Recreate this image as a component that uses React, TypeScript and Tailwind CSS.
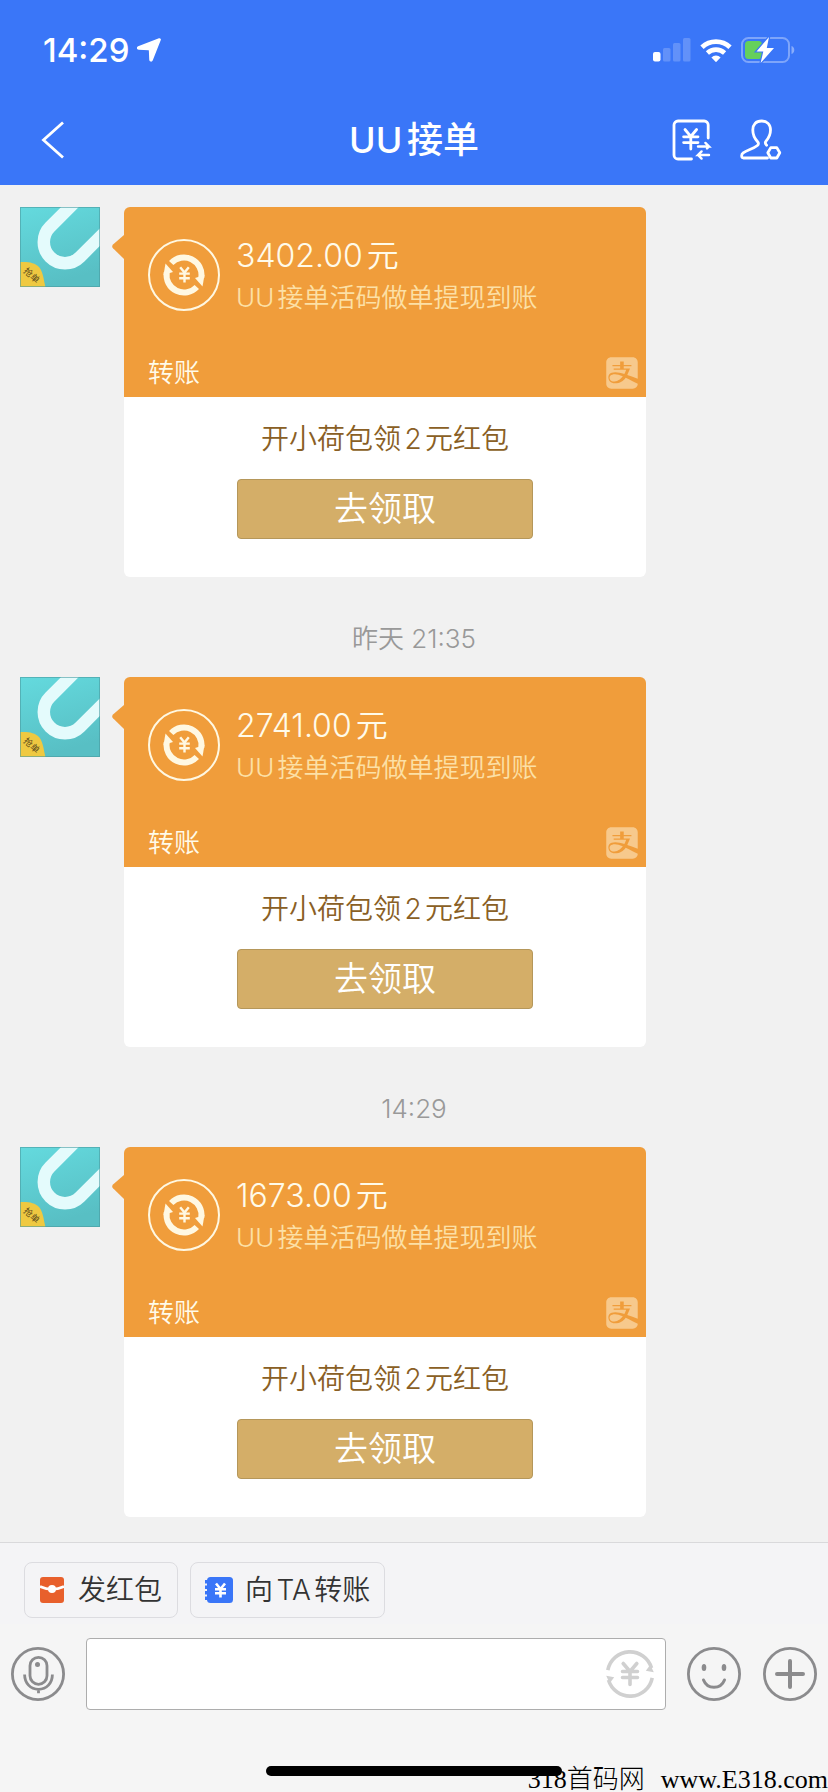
import { useState } from "react";
import { FaAlipay } from "react-icons/fa";

interface Transfer {
  id: number;
  time: string | null;
  amount: string;
}

const TRANSFERS: Transfer[] = [
  { id: 1, time: null, amount: "3402.00" },
  { id: 2, time: "昨天 21:35", amount: "2741.00" },
  { id: 3, time: "14:29", amount: "1673.00" },
];

function StatusBar() {
  return (
    <div className="flex h-[100px] items-center justify-between pl-[43px] pr-[33px]">
      <div className="flex items-center gap-2">
        <span className="text-[33px] leading-none font-medium">14:29</span>
        <svg className="h-6 w-6" viewBox="0 0 24 24" fill="currentColor" stroke="currentColor" strokeWidth="1.500" strokeLinejoin="round" aria-hidden="true">
          <path d="M22.2 1C23 .8 23.300 1.200 23 1.900L15 22.200C14.500 23.300 13 23 13 21.800L12.600 12.500C12.600 11.800 12.200 11.500 11.600 11.500L2 11C.8 11-.2 9.800 1.400 9Z" />
        </svg>
      </div>
      <div className="flex items-center gap-[9px]">
        <svg className="h-6 w-[38px]" viewBox="0 0 38 24" fill="currentColor" aria-hidden="true">
          <rect x="0" y="14" width="7.500" height="9.500" rx="2" />
          <g opacity="0.2">
            <rect x="10" y="10" width="7.500" height="13.500" rx="1.500" />
            <rect x="20" y="5" width="7.500" height="18.500" rx="1.500" />
            <rect x="30" y="0" width="7.500" height="23.500" rx="1.500" />
          </g>
        </svg>
        <svg className="h-6 w-8" viewBox="0 0 32 24" fill="none" stroke="currentColor" aria-hidden="true">
          <path d="M2 9.200a20.400 20.400 0 0 1 28 0" strokeWidth="4.800" />
          <path d="M7.400 15a12.600 12.600 0 0 1 17.200 0" strokeWidth="4.600" />
          <path d="M16 24.200l-4.600-4.800a6.800 6.800 0 0 1 9.200 0z" fill="currentColor" stroke="none" />
        </svg>
        <svg className="h-7 w-[54px]" viewBox="0 0 54 28" fill="none" aria-hidden="true">
          <rect x="1" y="2" width="47" height="24" rx="6.500" stroke="#fff" strokeOpacity="0.35" strokeWidth="2" />
          <path d="M50.500 10v8c1.600-.5 2.800-2 2.800-4s-1.200-3.500-2.800-4z" fill="#fff" fillOpacity="0.4" />
          <rect x="4" y="5" width="17" height="18" rx="3.500" fill="#65d05c" />
          <path
            d="M28 1L15.500 15.400h6.800L19.600 27 33 12h-7.200z"
            fill="#fff"
            stroke="#3a76f8"
            strokeWidth="2.400"
            paintOrder="stroke"
          />
        </svg>
      </div>
    </div>
  );
}

function NavBar() {
  return (
    <nav className="grid h-20 grid-cols-[1fr_auto_1fr] items-center">
      <div className="pl-[41px]">
        <button type="button" aria-label="返回" className="block">
          <svg className="h-10 w-6" viewBox="0 0 24 40" fill="none" stroke="currentColor" strokeWidth="2.800" aria-hidden="true">
            <path d="M22 2.500L2.500 20 22 37.500" />
          </svg>
        </button>
      </div>
      <h1 className="text-[36px] leading-none font-medium [text-autospace:normal]">UU接单</h1>
      <div className="flex justify-end gap-7 pr-[46px]">
        <button type="button" aria-label="转账记录">
          <svg
            className="h-[42px] w-10"
            viewBox="0 0 40 42"
            fill="none"
            stroke="currentColor"
            strokeWidth="2.800"
            strokeLinecap="round"
            aria-hidden="true"
          >
            <path d="M36.200 19V6a4 4 0 0 0-4-4H6a4 4 0 0 0-4 4v30a4 4 0 0 0 4 4h13.500" />
            <path d="M13 10.500l5.800 7 5.800-7M18.800 17.500V30M11.600 17.800h14.400M11.600 23.600h14.400" />
            <path d="M26 27.500h11l-3.600-3.600M37 36H26l3.600-3.600M26 36l3.600 3.600M37 27.500l-2 2" strokeWidth="2.400" />
          </svg>
        </button>
        <button type="button" aria-label="好友资料">
          <svg
            className="h-[42px] w-[42px]"
            viewBox="0 0 42 42"
            fill="none"
            stroke="currentColor"
            strokeWidth="2.800"
            strokeLinecap="round"
            strokeLinejoin="round"
            aria-hidden="true"
          >
            <path d="M27.500 39H3.500C1.200 39 1 35.500 3.200 33.800c3.800-3 10.200-3.900 14.200-7.300 1.400-1.200 1.300-2.600.2-3.800C14.300 19.200 12.800 15.500 12.800 11 12.800 5.500 16 2 21.500 2s9 3.500 9 9c0 4.300-1.800 8-4.500 11.200-1 1.200-.8 2.600.6 4" />
            <path d="M30.800 28.600h6l3 5.200-3 5.200h-6l-3-5.200z" />
          </svg>
        </button>
      </div>
    </nav>
  );
}

function Avatar() {
  return (
    <svg className="h-20 w-20 shrink-0" viewBox="0 0 80 80" aria-hidden="true">
      <defs>
        <linearGradient id="teal" x1="0" y1="0" x2="0.300" y2="1">
          <stop offset="0" stopColor="#64dade" />
          <stop offset="1" stopColor="#58bfc4" />
        </linearGradient>
      </defs>
      <rect width="80" height="80" fill="url(#teal)" />
      <path d="M56-6L30 20A21.200 21.200 0 0 0 60 50L88 22" fill="none" stroke="#e4fbfc" strokeWidth="12.500" />
      <path d="M0 55c8-.5 15 .5 19 5s4.500 12 6.500 20H0z" fill="#efc941" />
      <text
        x="11.500"
        y="71.500"
        textAnchor="middle"
        transform="rotate(42 11.500 68.500)"
        fontSize="9"
        fill="#5b4a1c"
      >
        抢单
      </text>
      <rect x="0.500" y="0.500" width="79" height="79" fill="none" stroke="#4a9ba0" strokeOpacity="0.6" />
    </svg>
  );
}

function TransferIcon() {
  return (
    <svg className="mt-1 h-[72px] w-[72px] shrink-0" viewBox="0 0 72 72" fill="none" stroke="#fff8e2" aria-hidden="true">
      <circle cx="36" cy="36" r="35" strokeWidth="2" />
      <g strokeWidth="6">
        <path d="M23.200 24A17.500 17.500 0 0 1 53.300 38.500" />
        <path d="M48.800 48A17.500 17.500 0 0 1 18.700 33.500" />
      </g>
      <g fill="#fff8e2" stroke="none">
        <path d="M56.500 36L47 39l7.500 8.500z" />
        <path d="M15.500 36L25 33l-7.500-8.500z" />
      </g>
      <path d="M32.200 28.300l4.300 5.200 4.300-5.200M36.500 33.500v10M31.200 34.600h10.600M31.200 39.200h10.600" strokeWidth="2.400" />
    </svg>
  );
}

function TransferCard({ amount }: { amount: string }) {
  return (
    <article className="relative w-[522px] max-w-full">
      <svg className="absolute top-7 -left-3 h-6 w-3" viewBox="0 0 12 24" fill="#f09d3b" aria-hidden="true">
        <path d="M12 0L1 9.500Q-.6 11.500 1 13.200L12 24z" />
      </svg>
      <div className="rounded-t-md bg-[#f09d3b] pt-7 pr-2 pb-2 pl-6">
        <div className="flex gap-4">
          <TransferIcon />
          <div>
            <p className="text-[32px] leading-[42px] font-[350] text-[#fffbea] [text-autospace:normal]">{amount}元</p>
            <p className="text-[26px] leading-[42px] font-[350] text-[#fce0a6] [text-autospace:normal]">
              UU接单活码做单提现到账
            </p>
          </div>
        </div>
        <div className="mt-[38px] flex h-8 items-center justify-between">
          <span className="text-[26px] leading-8 font-[350] text-[#fffbea]">转账</span>
          <FaAlipay className="h-9 w-8 text-[#f7c98c]" aria-hidden="true" />
        </div>
      </div>
      <div className="flex flex-col items-center rounded-b-md bg-white pt-[22px] pb-[38px]">
        <p className="text-[28px] leading-10 font-[350] text-[#8a5f25] [text-autospace:normal]">开小荷包领2元红包</p>
        <button
          type="button"
          className="mt-5 h-[60px] w-[296px] rounded-sm border border-[#b5975a] bg-[#d4ae68] text-[34px] leading-none font-[350] text-white"
        >
          去领取
        </button>
      </div>
    </article>
  );
}

function Message({ transfer }: { transfer: Transfer }) {
  return (
    <li>
      {transfer.time && (
        <p className="pt-[46px] pb-[22px] text-center text-[26px] leading-8 font-[350] text-[#999]">{transfer.time}</p>
      )}
      <div className="flex items-start gap-6 px-5">
        <Avatar />
        <TransferCard amount={transfer.amount} />
      </div>
    </li>
  );
}

function QuickActions() {
  const chip = "flex h-14 items-center rounded-lg border border-[#dcdce0] text-[28px] leading-none font-[350] text-[#333]";
  return (
    <div className="flex gap-3 border-t border-[#d9d9db] bg-[#f4f4f6] px-6 pt-[19px] pb-1.5">
      <button type="button" className={`${chip} gap-3.5 px-[15px]`}>
        <svg className="h-[26px] w-6" viewBox="0 0 24 26" aria-hidden="true">
          <rect width="24" height="26" rx="3" fill="#e8602c" />
          <path d="M0 9.500Q12 15 24 9.500" fill="none" stroke="#fff" strokeWidth="2.600" />
          <circle cx="12" cy="12" r="4" fill="#fff" />
        </svg>
        发红包
      </button>
      <button type="button" className={`${chip} gap-3 px-[14px] [text-autospace:normal]`}>
        <svg className="h-[26px] w-7" viewBox="0 0 28 26" aria-hidden="true">
          <rect x="2" width="26" height="26" rx="3.500" fill="#3a76f8" />
          <path d="M1.200 3v20" stroke="#3a76f8" strokeWidth="2.400" strokeDasharray="3.500 2" />
          <path
            d="M11 6.500l4.500 5.500L20 6.500M15.500 12v8.500M10 12.200h11M10 16.200h11"
            fill="none"
            stroke="#fff"
            strokeWidth="2.600"
          />
        </svg>
        向TA转账
      </button>
    </div>
  );
}

function Composer() {
  const [draft, setDraft] = useState("");

  return (
    <form className="flex items-center px-[11px] pt-[14px] text-[#8b8b8d]" onSubmit={(e) => e.preventDefault()}>
      <button type="button" aria-label="语音">
        <svg className="size-[54px]" viewBox="0 0 54 54" fill="none" stroke="currentColor" strokeWidth="2.800" aria-hidden="true">
          <circle cx="27" cy="27" r="25.600" />
          <rect x="19" y="10.300" width="17" height="27" rx="8.500" />
          <path d="M13.600 27.500c0 8.500 5.800 14.800 13.900 14.800s13.900-6.300 13.900-14.800M27.500 42.300v4" />
          <circle cx="26.500" cy="17.500" r="2.500" fill="currentColor" stroke="none" />
        </svg>
      </button>
      <div className="mx-[21px] flex h-[72px] min-w-0 flex-1 items-center rounded border border-[#adadad] bg-white pr-[11px]">
        <input
          type="text"
          aria-label="输入消息"
          value={draft}
          onChange={(e) => setDraft(e.target.value)}
          className="h-full min-w-0 flex-1 px-4 text-[28px] text-[#333] outline-none"
        />
        <button type="button" aria-label="转账" className="text-[#d0d0d0]">
          <svg className="size-12" viewBox="0 0 48 48" fill="none" stroke="currentColor" strokeWidth="3.600" aria-hidden="true">
            <path d="M1.800 20.200A22.500 22.500 0 0 1 45.500 18" />
            <path d="M46.200 27.800A22.500 22.500 0 0 1 2.500 30" />
            <path d="M47.800 22.200l-8-1.500 4.500-6z" fill="currentColor" stroke="none" />
            <path d="M.2 25.800l8 1.500-4.500 6z" fill="currentColor" stroke="none" />
            <path d="M17.200 13.500l6.800 8 6.800-8M24 21.500v13M16.500 21.500h15M16.500 27.500h15" strokeLinecap="round" />
          </svg>
        </button>
      </div>
      <button type="button" aria-label="表情">
        <svg className="size-[54px]" viewBox="0 0 54 54" fill="none" stroke="currentColor" strokeWidth="2.800" aria-hidden="true">
          <circle cx="27" cy="27" r="25.600" />
          <path d="M16.500 33c1.800 4.600 5.800 7.300 10.500 7.300s8.700-2.700 10.500-7.300" strokeWidth="3" strokeLinecap="round" />
          <ellipse cx="17" cy="20.500" rx="2.300" ry="3.600" fill="currentColor" stroke="none" />
          <ellipse cx="37" cy="20.500" rx="2.300" ry="3.600" fill="currentColor" stroke="none" />
        </svg>
      </button>
      <button type="button" aria-label="更多" className="ml-[22px]">
        <svg className="size-[54px]" viewBox="0 0 54 54" fill="none" stroke="currentColor" strokeWidth="2.800" aria-hidden="true">
          <circle cx="27" cy="27" r="25.600" />
          <path d="M27 14v26M14 27h26" strokeWidth="4" strokeLinecap="round" />
        </svg>
      </button>
    </form>
  );
}

export default function App() {
  return (
    <div className="flex min-h-screen flex-col bg-[#f1f1f1] font-['Inter','Noto_Sans_CJK_SC',sans-serif]">
      <header className="bg-[#3a76f8] pb-[5px] text-white">
        <StatusBar />
        <NavBar />
      </header>
      <main className="flex-1 pt-[22px] pb-6">
        <ul>
          {TRANSFERS.map((t) => (
            <Message key={t.id} transfer={t} />
          ))}
        </ul>
      </main>
      <footer className="relative bg-[#f5f5f5] pb-4">
        <QuickActions />
        <Composer />
        <div className="mx-auto mt-14 h-2.5 w-[296px] rounded-full bg-black" />
        <p className="absolute right-0 bottom-0 flex gap-4 font-['Liberation_Serif','Noto_Sans_CJK_SC',serif] text-[26px] leading-6 font-light text-black">
          <span>318首码网</span>
          <span>www.E318.com</span>
        </p>
      </footer>
    </div>
  );
}
